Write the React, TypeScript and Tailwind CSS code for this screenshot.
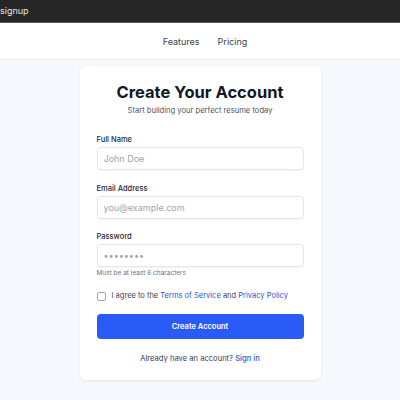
import { useState } from "react";

const font = { fontFamily: "Inter, 'Noto Sans', sans-serif" };

const Field = ({
  label,
  placeholder,
  type = "text",
  className = "",
}: {
  label: string;
  placeholder: string;
  type?: string;
  className?: string;
}) => (
  <div className={`flex flex-col ${className}`}>
    <label className="text-[7.5px] leading-[13px] font-medium text-[#1f2937] mb-[1px]">
      {label}
    </label>
    <input
      type={type}
      placeholder={placeholder}
      className="h-[23px] w-full rounded-[4px] border border-[#e3e6ea] bg-white px-[6px] text-[9px] text-[#111827] placeholder:text-[#9ca3af] shadow-[0_1px_1px_rgba(0,0,0,0.04)] outline-none"
    />
  </div>
);

export default function App() {
  const [agreed, setAgreed] = useState(false);

  return (
    <div className="min-h-[400px] bg-[#f5f8fc]" style={font}>
      <div className="h-[22px] bg-[#262626] border-b border-[#5a5a5a] flex items-center overflow-hidden box-content">
        <span className="text-[9px] text-[#e5e5e5]">signup</span>
      </div>

      <nav className="h-[37px] bg-white border-b border-[#eceef1] flex items-center justify-center gap-[18px] pl-[10px] pt-[2px]">
        <a className="text-[9px] text-[#374151]">Features</a>
        <a className="text-[9px] text-[#374151]">Pricing</a>
      </nav>

      <div className="mt-[6px] mx-auto w-[241px] rounded-md bg-white shadow-[0_1px_3px_rgba(0,0,0,0.08)] px-[17px] pt-[16px] pb-[15px]">
        <h1 className="text-[16.5px] leading-[20px] font-bold text-center text-[#111827]">
          Create Your Account
        </h1>
        <p className="mt-[3px] text-[7.6px] leading-[12px] text-center text-[#4b5563]">
          Start building your perfect resume today
        </p>

        <Field className="mt-[16px]" label="Full Name" placeholder="John Doe" />
        <Field className="mt-[12px]" label="Email Address" placeholder="you@example.com" type="email" />
        <Field className="mt-[11px]" label="Password" placeholder="••••••••" type="password" />
        <p className="mt-[1px] text-[6.5px] leading-[10px] text-[#6b7280]">
          Must be at least 6 characters
        </p>

        <label className="mt-[12px] h-[12px] flex items-center gap-[6px] text-[7.5px] text-[#374151]">
          <input
            type="checkbox"
            checked={agreed}
            onChange={(e) => setAgreed(e.target.checked)}
            className="appearance-none w-[9px] h-[9px] rounded-[2px] border border-[#9ca3af] bg-white"
          />
          <span>
            I agree to the <a className="text-[#2b56d3]">Terms of Service</a> and{" "}
            <a className="text-[#2b56d3]">Privacy Policy</a>
          </span>
        </label>

        <button className="mt-[12px] h-[25px] w-full rounded-[4px] bg-[#2b5bf6] text-white text-[7.5px] font-semibold">
          Create Account
        </button>

        <p className="mt-[14px] text-[7.6px] leading-[12px] text-center text-[#374151]">
          Already have an account? <a className="text-[#2b56d3] font-medium">Sign in</a>
        </p>
      </div>
    </div>
  );
}
